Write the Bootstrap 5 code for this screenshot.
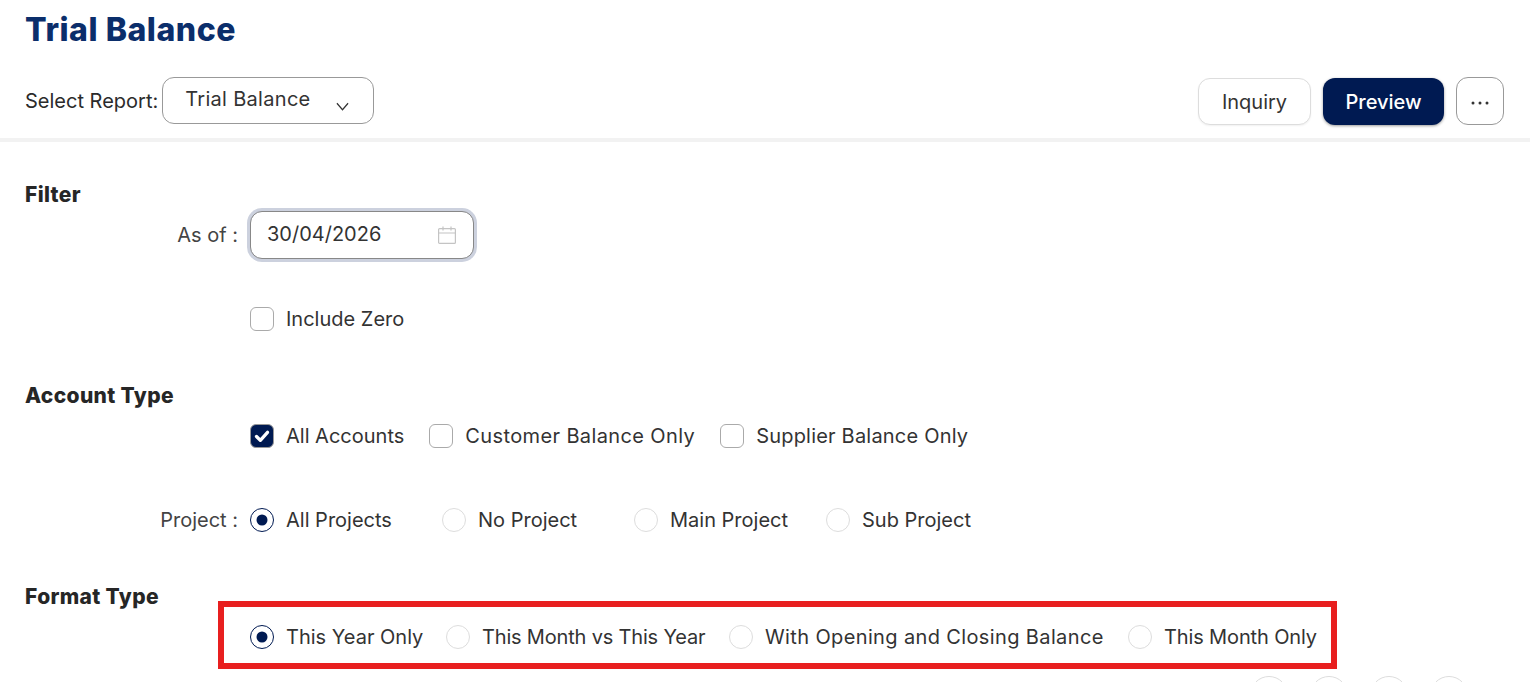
<!DOCTYPE html>
<html lang="en">
<head>
  <meta charset="UTF-8" />
  <meta name="viewport" content="width=device-width, initial-scale=1.0" />
  <title>Trial Balance</title>
  <link href="https://cdn.jsdelivr.net/npm/bootstrap@5.3.0/dist/css/bootstrap.min.css" rel="stylesheet" />
  <style>
    html, body { height: 682px; overflow: hidden; }
    body { font-family: "Inter", "Noto Sans", sans-serif; font-size: 20px; color: #2b2b2b; background: #fff; }
    .page-title { font-size: 32px; line-height: 40px; font-weight: 800; color: #0b2e6b; margin: 10px 0 0 25px; letter-spacing: .55px; }
    .top-bar { height: 61px; padding: 0 26px 0 25px; margin-top: 27px; }
    .top-label { margin-right: 4px; }
    .report-select { width: 212px; height: 47px; border: 1px solid #999; border-radius: 12px; padding: 0 0 4px 22px; font-size: 20px; letter-spacing: .3px; color: #333; box-shadow: none;
      background-image: url("data:image/svg+xml,%3csvg xmlns='http://www.w3.org/2000/svg' viewBox='0 0 14 9'%3e%3cpath fill='none' stroke='%23333' stroke-width='1.3' d='M1 1l6 7 6-7'/%3e%3c/svg%3e");
      background-size: 13px 9px; background-position: 173px 24px; }
    .btn-inquiry, .btn-preview, .btn-more { border-radius: 12px; font-size: 20px; padding: 0; }
    .btn-inquiry, .btn-preview { height: 47px; margin-top: 1px; }
    .btn-more { height: 48px; }
    .btn-inquiry { width: 113px; border: 1px solid #ddd; color: #333; background: #fff; box-shadow: 0 1px 2px rgba(0,0,0,.06); }
    .btn-preview { width: 121px; background: #001a52; color: #fff; border: 0; font-weight: 500; box-shadow: 0 1px 3px rgba(0,0,0,.4); }
    .btn-more { width: 48px; border: 1px solid #999; background: #fff; color: #333; }
    .top-rule { height: 4px; background: #f2f2f2; }
    .form-area { padding: 40px 0 0 25px; }
    .sec-title { font-size: 21px; line-height: 26px; font-weight: 800; color: #262626; letter-spacing: .35px; }
    .sec-account { margin-top: 49px; }
    .sec-format { margin-top: 49px; }
    .field-row { display: flex; align-items: center; }
    .filter-date { margin-top: 3px; }
    .row-zero { margin-top: 45px; }
    .row-account { margin-top: 12px; }
    .row-project { margin-top: 54px; }
    .field-label { width: 225px; padding-right: 12px; text-align: right; color: #444; flex: none; }
    .date-wrap { position: relative; width: 224px; }
    .date-input { height: 48px; border: 1px solid #888; border-radius: 12px; padding: 0 0 2px 16px; font-size: 20px; color: #333; box-shadow: 0 0 0 3px #ccd1de; }
    .date-input:focus { border-color: #888; box-shadow: 0 0 0 3px #ccd1de; }
    .date-icon { position: absolute; right: 18px; top: 15px; }
    .opt { display: flex; align-items: center; margin: 0; padding: 0; min-height: 0; flex: none; }
    .opt-gap { margin-left: 25px; }
    .opt .form-check-input { width: 24px; height: 24px; margin: 0 12px 0 0; float: none; flex: none; border: 1px solid #aaa; box-shadow: none; }
    .opt .form-check-input[type=checkbox] { border-radius: 6px; }
    .opt .form-check-input[type=radio] { border-color: #ddd; }
    .opt .form-check-input:checked[type=checkbox] { background-color: #001a52; border-color: #999;
      background-image: url("data:image/svg+xml,%3csvg xmlns='http://www.w3.org/2000/svg' viewBox='0 0 24 24'%3e%3cpath fill='none' stroke='%23fff' stroke-width='3.6' stroke-linecap='round' stroke-linejoin='round' d='M6 12.5l4.2 4.2L18 8'/%3e%3c/svg%3e"); background-size: 100%; }
    .opt .form-check-input:checked[type=radio] { background-color: #fff; border-color: #001a52;
      background-image: url("data:image/svg+xml,%3csvg xmlns='http://www.w3.org/2000/svg' viewBox='0 0 24 24'%3e%3ccircle cx='12' cy='12' r='6' fill='%23001a52'/%3e%3c/svg%3e"); background-size: 100%; }
    .opt-label { color: #333; white-space: nowrap; }
    .ls-customer { letter-spacing: .38px; }
    .ls-supplier { letter-spacing: .2px; }
    .ls-opening { letter-spacing: .37px; }
    .ls-month { letter-spacing: -.18px; }
    .ls-monthonly { letter-spacing: -.13px; }
    .w-project { width: 192px; }
    .w-year { width: 196px; }
    .w-month { width: 283px; }
    .w-opening { width: 399px; }
    .format-box { display: flex; align-items: center; width: 1119px; height: 68px; margin: -9px 0 0 193px; border: 6px solid #e81f1f; padding: 4px 0 0 26px; }
    .dot-row { gap: 22px; height: 6px; overflow: hidden; margin: 7px 0 0 1225px; }
    .dot { width: 38px; height: 38px; flex: none; border: 1px solid #ddd; border-radius: 50%; }
  </style>
</head>
<body>
  <h1 class="page-title">Trial Balance</h1>
  <div class="top-bar d-flex align-items-start justify-content-between">
    <div class="d-flex align-items-center">
      <span class="top-label">Select Report:</span>
      <select class="form-select report-select"><option>Trial Balance</option></select>
    </div>
    <div class="d-flex gap-2 align-items-start">
      <button type="button" class="btn btn-inquiry">Inquiry</button>
      <button type="button" class="btn btn-preview ms-1">Preview</button>
      <button type="button" class="btn btn-more ms-1">
        <svg width="18" height="4" viewBox="0 0 18 4"><circle cx="2" cy="2" r="1.5" fill="#333"/><circle cx="9" cy="2" r="1.5" fill="#333"/><circle cx="16" cy="2" r="1.5" fill="#333"/></svg>
      </button>
    </div>
  </div>
  <div class="top-rule"></div>

  <div class="form-area">
    <div class="sec-title">Filter</div>
    <div class="field-row filter-date">
      <div class="field-label">As of :</div>
      <div class="date-wrap">
        <input type="text" class="form-control date-input" value="30/04/2026" />
        <svg class="date-icon" width="18" height="18" viewBox="0 0 18 18" fill="none" stroke="#c4c4c4" stroke-width="1.2"><rect x=".6" y="2.6" width="16.8" height="14.8" rx="1"/><path d="M.6 7h16.8M5 .5v4M13 .5v4"/></svg>
      </div>
    </div>
    <div class="field-row row-zero">
      <div class="field-label"></div>
      <label class="opt"><input class="form-check-input" type="checkbox" /><span class="opt-label">Include Zero</span></label>
    </div>

    <div class="sec-title sec-account">Account Type</div>
    <div class="field-row row-account">
      <div class="field-label"></div>
      <label class="opt"><input class="form-check-input" type="checkbox" checked /><span class="opt-label">All Accounts</span></label>
      <label class="opt opt-gap"><input class="form-check-input" type="checkbox" /><span class="opt-label ls-customer">Customer Balance Only</span></label>
      <label class="opt opt-gap"><input class="form-check-input" type="checkbox" /><span class="opt-label ls-supplier">Supplier Balance Only</span></label>
    </div>
    <div class="field-row row-project">
      <div class="field-label">Project :</div>
      <label class="opt w-project"><input class="form-check-input" type="radio" name="project" checked /><span class="opt-label">All Projects</span></label>
      <label class="opt w-project"><input class="form-check-input" type="radio" name="project" /><span class="opt-label">No Project</span></label>
      <label class="opt w-project"><input class="form-check-input" type="radio" name="project" /><span class="opt-label">Main Project</span></label>
      <label class="opt w-project"><input class="form-check-input" type="radio" name="project" /><span class="opt-label">Sub Project</span></label>
    </div>

    <div class="sec-title sec-format">Format Type</div>
    <div class="format-box">
      <label class="opt w-year"><input class="form-check-input" type="radio" name="format" checked /><span class="opt-label">This Year Only</span></label>
      <label class="opt w-month"><input class="form-check-input" type="radio" name="format" /><span class="opt-label ls-month">This Month vs This Year</span></label>
      <label class="opt w-opening"><input class="form-check-input" type="radio" name="format" /><span class="opt-label ls-opening">With Opening and Closing Balance</span></label>
      <label class="opt"><input class="form-check-input" type="radio" name="format" /><span class="opt-label ls-monthonly">This Month Only</span></label>
    </div>
    <div class="dot-row d-flex">
      <div class="dot"></div><div class="dot"></div><div class="dot"></div><div class="dot"></div>
    </div>
  </div>
  <script src="https://cdn.jsdelivr.net/npm/bootstrap@5.3.0/dist/js/bootstrap.bundle.min.js"></script>
</body>
</html>
